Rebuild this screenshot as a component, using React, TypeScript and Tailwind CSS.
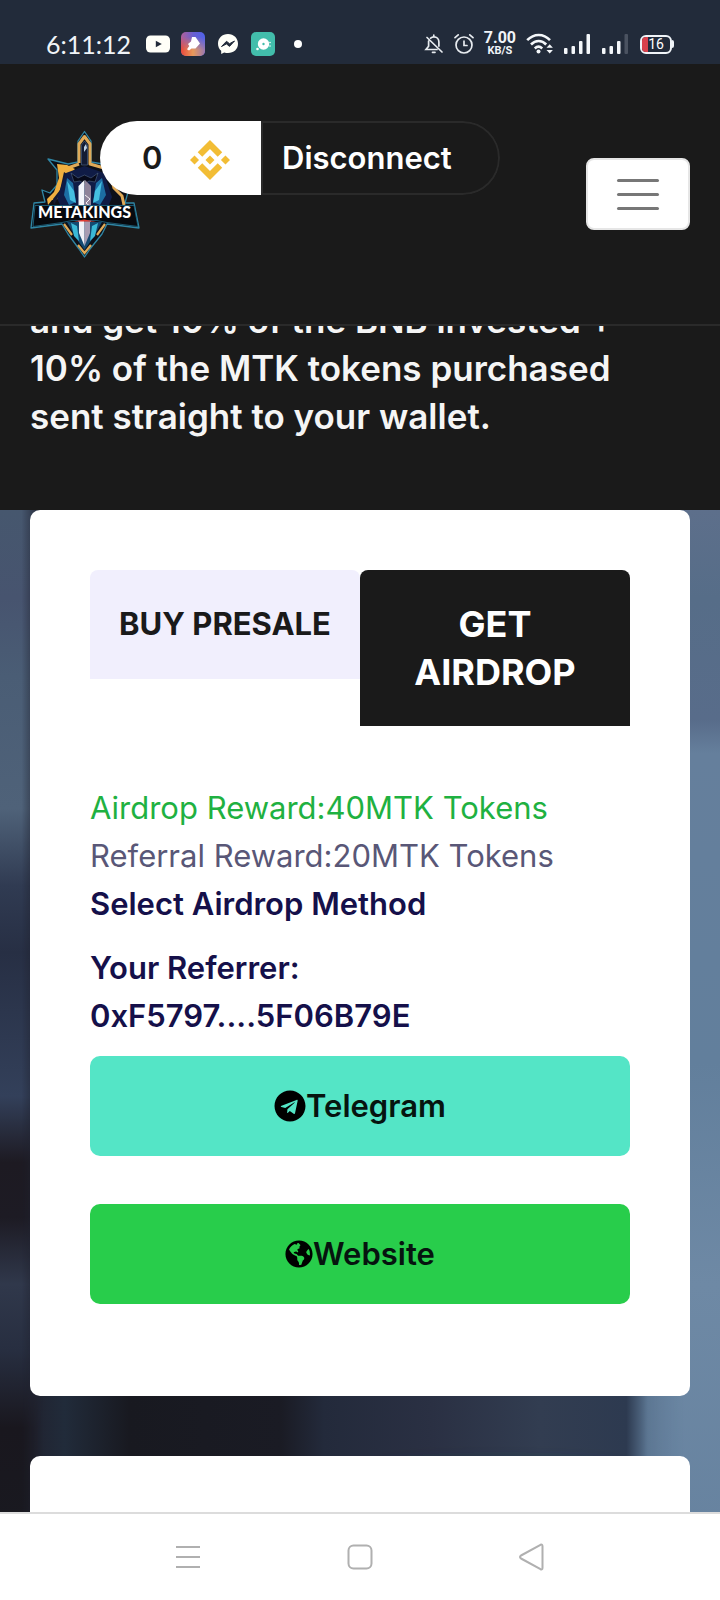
import type { ReactNode } from "react";
import { FaGlobeAmericas, FaTelegram } from "react-icons/fa";
import { SiBinance } from "react-icons/si";

function YoutubeIcon() {
  return (
    <svg className="h-6 w-6" viewBox="0 0 24 24" aria-hidden="true">
      <rect x="0" y="3.500" width="24" height="17" rx="4.500" fill="#fffff8" />
      <path d="M9.800 8.800v6.400l6-3.200z" fill="#222b3a" />
    </svg>
  );
}

function GalleryIcon() {
  return (
    <svg className="h-6 w-6" viewBox="0 0 24 24" aria-hidden="true">
      <defs>
        <linearGradient id="gallery-top" x1="0" y1="0" x2="1" y2="0">
          <stop offset="0" stopColor="#b0609a" />
          <stop offset="0.5" stopColor="#6a5fd0" />
          <stop offset="1" stopColor="#4f62ea" />
        </linearGradient>
        <linearGradient id="gallery-low" x1="0" y1="0" x2="1" y2="0">
          <stop offset="0" stopColor="#e8493c" />
          <stop offset="0.5" stopColor="#e89a5a" />
          <stop offset="1" stopColor="#9a78b0" />
        </linearGradient>
        <linearGradient id="gallery-fade" x1="0" y1="0" x2="0" y2="1">
          <stop offset="0.2" stopColor="#fff" stopOpacity="0" />
          <stop offset="0.75" stopColor="#fff" />
        </linearGradient>
        <mask id="gallery-mask">
          <rect width="24" height="24" fill="url(#gallery-fade)" />
        </mask>
      </defs>
      <rect width="24" height="24" rx="5" fill="url(#gallery-top)" />
      <rect width="24" height="24" rx="5" fill="url(#gallery-low)" mask="url(#gallery-mask)" />
      <path d="M11 5h3.500l4.500 6.500-4.500 5h-4L8 18.500l-2-1.300L8.300 14 7 12l3-2.500z" fill="#fff" />
    </svg>
  );
}

function MessengerIcon() {
  return (
    <svg className="h-6 w-6" viewBox="0 0 24 24" aria-hidden="true">
      <path
        d="M12 2C6.200 2 2 6.200 2 11.700c0 2.900 1.200 5.400 3.200 7.100V22l3-1.600c1.200.4 2.500.6 3.800.6 5.800 0 10-4 10-9.300S17.800 2 12 2z"
        fill="#fffff8"
      />
      <path d="M5.500 14.500l5-5.200 3 2.400 5-2.700-5 5.400-3-2.500z" fill="#222b3a" stroke="#222b3a" strokeWidth="1" />
    </svg>
  );
}

function CameraIcon() {
  return (
    <svg className="h-6 w-6" viewBox="0 0 24 24" aria-hidden="true">
      <rect width="24" height="24" rx="5" fill="#42bdab" />
      <circle cx="12.500" cy="12" r="5.700" fill="#fff" />
      <circle cx="12.500" cy="12" r="1.200" fill="#42bdab" />
      <circle cx="6.500" cy="17" r="1.300" fill="#fff" />
      <circle cx="19" cy="10.500" r="0.800" fill="#fff" />
      <circle cx="19" cy="14" r="0.800" fill="#fff" />
    </svg>
  );
}

function MutedBellIcon() {
  return (
    <svg className="h-5 w-5" viewBox="0 0 20 20" fill="none" stroke="#e8ecf0" strokeWidth="1.700" strokeLinecap="round" aria-hidden="true">
      <path d="M9.800 1.200v1.200M6.600 4.200c1-.9 2-1.300 3.300-1.300 3 0 5 2.200 5 5.200v4M4.600 7v5.200L2 15.500h11M8.500 18.300h2.500M3 3.500l15 14.500" />
    </svg>
  );
}

function AlarmIcon() {
  return (
    <svg className="h-5 w-5" viewBox="0 0 20 20" fill="none" stroke="#e8ecf0" strokeWidth="1.700" strokeLinecap="round" aria-hidden="true">
      <circle cx="10" cy="11" r="8" />
      <path d="M10 7.200V11.500h3M1 3.600L4.200.9M19 3.600L15.800.9" />
    </svg>
  );
}

function WifiIcon() {
  return (
    <svg className="h-6 w-7" viewBox="0 0 28 24" fill="none" stroke="#f4f7fa" strokeWidth="2.600" aria-hidden="true">
      <path d="M1.200 8.200C8 1.200 17.500 1.200 24 8.200M5 12.500c4.500-4.600 10.800-4.600 15.200 0M8.800 16.500c2.400-2.300 5-2.300 7.400 0" />
      <circle cx="12.500" cy="19.500" r="2" fill="#f4f7fa" stroke="none" />
      <path d="M20.500 15.800l3.200-3.600 3.200 3.600zM20.500 18l3.200 3.600 3.200-3.600z" fill="#f4f7fa" stroke="none" />
    </svg>
  );
}

function SignalIcon({ weak = false }: { weak?: boolean }) {
  return (
    <svg className="h-5 w-[26px]" viewBox="0 0 26 20" aria-hidden="true">
      <g fill="#f4f7fa">
        <rect x="0" y="14" width="3.500" height="6" rx="1" />
        <rect x="7.500" y="12" width="3.500" height="8" rx="1" />
        <rect x="15" y="7" width="3.500" height="13" rx="1" />
        <rect x="22.500" y="0" width="3.500" height="20" rx="1" fill={weak ? "#4a5260" : "#f4f7fa"} />
      </g>
    </svg>
  );
}

function StatusBar() {
  return (
    <div className="flex h-16 shrink-0 items-end justify-between bg-[#222b3a] pr-[46px] pb-1 pl-[46px]">
      <div className="flex h-8 items-center gap-[11px]">
        <time className="mr-1 font-['Lato',sans-serif] text-[25px] leading-8 text-[#f0f4f8]">6:11:12</time>
        <YoutubeIcon />
        <GalleryIcon />
        <MessengerIcon />
        <CameraIcon />
        <span className="ml-2 h-2 w-2 rounded-full bg-white" />
      </div>
      <div className="flex h-8 items-center gap-[10px]">
        <MutedBellIcon />
        <AlarmIcon />
        <div className="flex flex-col items-center font-['Roboto',sans-serif] font-bold text-[#f0f4f8]">
          <span className="text-base leading-[14px]">7.00</span>
          <span className="text-[11px] leading-[12px]">KB/S</span>
        </div>
        <WifiIcon />
        <SignalIcon />
        <span className="ml-[2px]">
          <SignalIcon weak />
        </span>
        <div className="ml-[2px] flex items-center">
          <div className="relative flex h-[19px] w-8 items-center justify-center overflow-hidden rounded-md border-2 border-[#f0f4f8]">
            <span className="absolute inset-y-0 left-0 w-[6px] bg-[#d8414c]" />
            <span className="relative font-['Roboto',sans-serif] text-sm leading-4 text-white">16</span>
          </div>
          <span className="h-2 w-[2px] rounded-r bg-[#f0f4f8]" />
        </div>
      </div>
    </div>
  );
}

function Logo() {
  return (
    <svg className="h-32 w-[110px]" viewBox="0 0 110 128" role="img" aria-label="Metakings">
      <path
        d="M54.500 1.500L61 11V32L73 34L82 40L92 36L89 46L90 58L98 62L95 73H104L109 98L77 94L72 104L60 119L54.500 127L49 119L38 104L32 94L1 98L4 73L15 72L12 60L20 63L27 55L27 40L18 29L38 34L48 32V11Z"
        fill="#0d1018"
        stroke="#2f86a5"
        strokeWidth="1.300"
        strokeLinejoin="round"
      />
      <path
        d="M49 33V14l5.500-7.500L60 14v20l14 4 6 6 4 14 8 8 2 9M35 39l14-5"
        fill="none"
        stroke="#dfaa58"
        strokeWidth="3"
        strokeLinejoin="round"
      />
      <path d="M27 34l10 1 8 4-6 7-2 14-9 9-6 1-4 5-1-6 7-7 5-14z" fill="#f0b040" />
      <path d="M34 42l3 2-1 14-8 9-4 8-1-6 7-9z" fill="#141a30" />
      <path d="M51.500 35V15l3-4 3 4v20z" fill="#131b33" stroke="#4d6a92" strokeWidth="0.600" />
      <path d="M54 17l2-3 1 4-3 4z" fill="#bcd0e4" />
      <path d="M36 43l18.500-7L74 43l8 24-4 10H31l-4-9z" fill="#101c46" />
      <path d="M37 48l6 5 3 19-7 3-5-10zM72 48l-6 5-3 19 7 3 6-10z" fill="#1c6ea4" />
      <path d="M37 51l7 10 2 12-6-3zM72 51l-7 10-2 12 6-3z" fill="#45bfe0" />
      <path d="M41 43l7 5 6.500-3 6.500 3 7-5-3 9-6-1-4.500 3-4.500-3-6 1z" fill="#070a1a" stroke="#5d7493" strokeWidth="0.500" />
      <path d="M48.500 56l6-6v64l-6-14z" fill="#f4f6fb" />
      <path d="M55 50l6 6v44l-6 14z" fill="#8f8399" />
      <path d="M55 65l5 4-4 4 5 4" stroke="#fff" strokeWidth="0.900" fill="none" />
      <path d="M37 92h35l-9 16-8.500 12-8.500-12z" fill="#134a71" />
      <path d="M5 75.500h99l4 21-31-4-10-2H42l-10 2-29 4z" fill="#07090e" stroke="#1f6a85" strokeWidth="0.800" />
      <path d="M41 93l6 3 2 15-5-5zM68 93l-6 3-2 15 5-5z" fill="#3ab9d6" />
      <path d="M49 92h5.500v24L49 103z" fill="#f0f1f7" />
      <path d="M54.500 92H60v11l-5.500 13z" fill="#a79cb2" />
      <path d="M34 94l8 11M75 94l-8 11M48 115l6.500 8 6.500-8" stroke="#dfaa58" strokeWidth="2.200" fill="none" />
      <text x="54.500" y="88" textAnchor="middle" fontFamily="Lato, sans-serif" fontWeight="900" fontSize="16" fill="#fff">
        METAKINGS
      </text>
      <path d="M44 91.500l10-2 12 2z" fill="#e23a32" />
    </svg>
  );
}

function Header() {
  return (
    <header className="relative z-10 flex h-[262px] shrink-0 items-center justify-between border-b-2 border-[#2a2a2a] bg-[#1a1a1a] px-[30px]">
      <a href="#home">
        <Logo />
      </a>
      <div className="absolute top-[57px] left-[100px] flex h-[74px] w-[400px] overflow-hidden rounded-full text-[31px] font-semibold">
        <div className="flex w-[161px] items-center gap-7 bg-white pl-[42px] text-[#1a1a1a]">
          <span>0</span>
          <SiBinance className="mt-1 h-10 w-10 text-[#f2bd35]" />
        </div>
        <button type="button" className="flex-1 rounded-r-full border-2 border-[#2a2a2a] pl-[19px] text-left text-white">
          Disconnect
        </button>
      </div>
      <button
        type="button"
        aria-label="Toggle navigation"
        className="flex h-[72px] w-[104px] flex-col items-center justify-center gap-[11px] rounded-lg border-2 border-[#e6e6e6] bg-white"
      >
        <span className="h-[3px] w-[42px] rounded-full bg-[#777777]" />
        <span className="h-[3px] w-[42px] rounded-full bg-[#777777]" />
        <span className="h-[3px] w-[42px] rounded-full bg-[#777777]" />
      </button>
    </header>
  );
}

function Backdrop() {
  return (
    <svg className="absolute inset-0 h-full w-full" viewBox="0 0 720 1002" preserveAspectRatio="none" aria-hidden="true">
      <defs>
        <linearGradient id="bg-floor">
          <stop offset="0" stopColor="#191a22" />
          <stop offset="0.04" stopColor="#20222f" />
          <stop offset="0.09" stopColor="#212b3a" />
          <stop offset="0.18" stopColor="#181920" />
          <stop offset="0.39" stopColor="#1a1b24" />
          <stop offset="0.45" stopColor="#232a3b" />
          <stop offset="0.6" stopColor="#2a3043" />
          <stop offset="0.75" stopColor="#323d51" />
          <stop offset="0.87" stopColor="#2d3a50" />
          <stop offset="0.9" stopColor="#5a7490" />
          <stop offset="1" stopColor="#66829f" />
        </linearGradient>
        <linearGradient id="bg-left" x1="0" y1="0" x2="0" y2="1">
          <stop offset="0" stopColor="#46576e" />
          <stop offset="0.08" stopColor="#47546f" />
          <stop offset="0.15" stopColor="#4a5d75" />
          <stop offset="0.27" stopColor="#4f6279" />
          <stop offset="0.34" stopColor="#303b52" />
          <stop offset="0.4" stopColor="#272f44" />
          <stop offset="0.53" stopColor="#33405a" />
          <stop offset="0.59" stopColor="#1d1a22" />
          <stop offset="0.64" stopColor="#1d1b24" />
          <stop offset="0.7" stopColor="#30384b" />
          <stop offset="0.76" stopColor="#272e40" />
          <stop offset="0.83" stopColor="#19171e" />
          <stop offset="1" stopColor="#191b22" />
        </linearGradient>
        <linearGradient id="bg-right" x1="0" y1="0" x2="0" y2="1">
          <stop offset="0" stopColor="#5d6f8b" />
          <stop offset="0.08" stopColor="#566d88" />
          <stop offset="0.19" stopColor="#586c8a" />
          <stop offset="0.22" stopColor="#657f9c" />
          <stop offset="0.5" stopColor="#627f9c" />
          <stop offset="0.7" stopColor="#6e89a5" />
          <stop offset="0.95" stopColor="#66829f" />
          <stop offset="0.98" stopColor="#43546c" />
          <stop offset="1" stopColor="#3c4a60" />
        </linearGradient>
        <linearGradient id="bg-edges">
          <stop offset="0.03" stopColor="#fff" />
          <stop offset="0.06" stopColor="#000" />
          <stop offset="0.89" stopColor="#000" />
          <stop offset="0.95" stopColor="#fff" />
        </linearGradient>
        <mask id="bg-edge-mask">
          <rect width="720" height="1002" fill="url(#bg-edges)" />
        </mask>
        <filter id="bg-soft" x="-50%" y="-200%" width="200%" height="500%">
          <feGaussianBlur stdDeviation="12" />
        </filter>
      </defs>
      <rect width="720" height="1002" fill="url(#bg-floor)" />
      <ellipse cx="500" cy="884" rx="130" ry="10" fill="#2b4257" filter="url(#bg-soft)" />
      <ellipse cx="60" cy="944" rx="35" ry="8" fill="#271f36" filter="url(#bg-soft)" />
      <g mask="url(#bg-edge-mask)">
        <rect width="360" height="1002" fill="url(#bg-left)" />
        <rect x="360" width="360" height="1002" fill="url(#bg-right)" />
      </g>
    </svg>
  );
}

function LinkButton({ color, icon, label }: { color: string; icon: ReactNode; label: string }) {
  return (
    <button type="button" className={`flex h-[100px] w-full items-center justify-center rounded-[10px] text-[31px] font-semibold text-[#06140f] ${color}`}>
      {icon}
      <span>{label}</span>
    </button>
  );
}

function AirdropCard() {
  return (
    <section className="rounded-[10px] bg-white px-[60px] pt-[60px] pb-[92px]">
      <div role="tablist" className="grid grid-cols-2 items-start">
        <button
          type="button"
          role="tab"
          aria-selected="false"
          className="h-[109px] rounded-t-lg bg-[#f1effd] text-[31px] font-bold whitespace-nowrap text-[#1a1a1a]"
        >
          BUY PRESALE
        </button>
        <button
          type="button"
          role="tab"
          aria-selected="true"
          className="rounded-t-lg bg-[#1a1a1a] px-10 py-[30px] text-[36px] leading-[48px] font-bold text-white"
        >
          GET AIRDROP
        </button>
      </div>
      <div className="pt-[58px] text-[31px] leading-[48px] text-[#15104a]">
        <p className="text-[#1fb141]">Airdrop Reward:40MTK Tokens</p>
        <p className="text-[#595777]">Referral Reward:20MTK Tokens</p>
        <p className="font-semibold">Select Airdrop Method</p>
        <p className="mt-4 font-semibold">
          Your Referrer:
          <br />
          0xF5797....5F06B79E
        </p>
      </div>
      <div className="mt-4 flex flex-col gap-12">
        <LinkButton color="bg-[#54e5c6]" icon={<FaTelegram className="h-8 w-8 text-black" />} label="Telegram" />
        <LinkButton color="bg-[#28cd4b]" icon={<FaGlobeAmericas className="h-7 w-7 text-black" />} label="Website" />
      </div>
    </section>
  );
}

function NavigationBar() {
  return (
    <nav className="relative z-10 flex h-[88px] shrink-0 items-center justify-center gap-36 border-t-2 border-[#dcdcdc] bg-white">
      <button type="button" aria-label="Recent apps" className="h-7 w-7">
        <svg viewBox="0 0 28 28" fill="none" stroke="#b0b0b0" strokeWidth="2">
          <path d="M2 4h24M2 14h24M2 24h24" />
        </svg>
      </button>
      <button type="button" aria-label="Home" className="h-7 w-7">
        <svg viewBox="0 0 28 28" fill="none" stroke="#b0b0b0" strokeWidth="2">
          <rect x="2.500" y="2.500" width="23" height="23" rx="5" />
        </svg>
      </button>
      <button type="button" aria-label="Back" className="h-7 w-7">
        <svg viewBox="0 0 28 28" fill="none" stroke="#b0b0b0" strokeWidth="2" strokeLinejoin="round">
          <path d="M22.500 1.800L3 12.500q-2 1.500 0 3l19.500 10.700q2 .8 2-1.500V3.300q0-2.300-2-1.500z" />
        </svg>
      </button>
    </nav>
  );
}

export default function App() {
  return (
    <div className="flex h-screen flex-col overflow-hidden bg-[#1a1a1a] font-['Inter',sans-serif]">
      <StatusBar />
      <Header />
      <main className="flex min-h-0 flex-1 flex-col overflow-hidden">
        <p className="-mt-[30px] shrink-0 px-[30px] pb-[70px] text-[35px] leading-[48px] font-semibold text-[#f5f5f5]">
          and get 10% of the BNB invested +
          <br />
          10% of the MTK tokens purchased
          <br />
          sent straight to your wallet.
        </p>
        <div className="relative flex-1">
          <Backdrop />
          <div className="relative flex flex-col gap-[60px] px-[30px]">
            <AirdropCard />
            <section className="h-40 rounded-[10px] bg-white" />
          </div>
        </div>
      </main>
      <NavigationBar />
    </div>
  );
}
